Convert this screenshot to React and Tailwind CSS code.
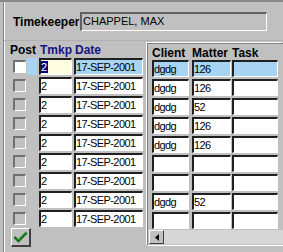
import React from 'react';

const rows = [
  { client: 'dgdg', matter: '126' },
  { client: 'dgdg', matter: '126' },
  { client: 'dgdg', matter: '52' },
  { client: 'dgdg', matter: '126' },
  { client: 'dgdg', matter: '126' },
  { client: '', matter: '' },
  { client: '', matter: '' },
  { client: 'dgdg', matter: '52' },
  { client: '', matter: '' },
];

const cell =
  'h-[17px] border-t-2 border-l-2 border-b border-r border-t-[#202020] border-l-[#202020] border-b-white border-r-white text-[11px] leading-[14px] tracking-[-0.6px] whitespace-nowrap overflow-hidden';

function Cell({ w, bg = 'bg-white', children }) {
  return <div className={`${cell} ${w} ${bg}`}>{children}</div>;
}

export default function App() {
  return (
    <div className="w-[283px] h-[252px] overflow-hidden bg-[#c0c0c0] border-t-2 border-[#8a8a8a] font-['Liberation_Sans',Arial,sans-serif] text-black">
      <div className="ml-[3px] h-full border-l border-[#808080] shadow-[inset_1px_0_0_#ffffff] flex flex-col">
        {/* timekeeper */}
        <div className="flex items-center mt-[10px] pl-[9px]">
          <span className="w-[67px] text-[12px] font-bold leading-[14px]">Timekeeper</span>
          <div className="w-[187px] h-[19px] border-t-2 border-l-2 border-b border-r border-t-[#606060] border-l-[#606060] border-b-white border-r-white text-[11px] leading-[15px] pl-[1px]">
            CHAPPEL, MAX
          </div>
        </div>
        <div className="mt-[9px] h-px bg-[#b0b0b0]" />

        <div className="flex flex-1">
          {/* left part */}
          <div className="w-[143px] flex flex-col pt-[2px]">
            <div className="flex text-[12px] font-bold leading-[14px]">
              <span className="w-[36px] pl-[6px]">Post</span>
              <span className="w-[35px] text-[#141482]">Tmkp</span>
              <span className="text-[#141482]">Date</span>
            </div>
            <div className="mt-[1px] flex flex-col gap-[2px]">
              {rows.map((r, i) => (
                <div key={i} className="flex h-[17px]">
                  <div className="w-[35px] flex items-center">
                    <div
                      className={`ml-[9px] w-[13px] h-[13px] border-t-2 border-l-2 border-b border-r border-t-[#707070] border-l-[#707070] border-b-white border-r-white ${
                        i === 0 ? 'bg-white' : 'bg-[#c0c0c0]'
                      }`}
                    />
                    {i === 0 && <div className="ml-[1px] w-[10px] h-[17px] bg-[#a6d4f2]" />}
                  </div>
                  <Cell w="w-[33px]" bg={i === 0 ? 'bg-[#fffde0]' : 'bg-white'}>
                    {i === 0 ? <span className="bg-[#000080] text-white pr-[1px]">2</span> : '2'}
                  </Cell>
                  <div className="w-[2px]" />
                  <Cell w="w-[69px]" bg={i === 0 ? 'bg-[#a6d4f2]' : 'bg-white'}>
                    17-SEP-2001
                  </Cell>
                </div>
              ))}
            </div>
            <button className="mt-[1px] ml-[7px] w-[20px] h-[19px] flex items-center justify-center border-t border-l border-b-2 border-r-2 border-t-white border-l-white border-b-[#404040] border-r-[#404040] bg-[#c0c0c0]">
              <svg width="15" height="12" viewBox="0 0 15 12">
                <polyline points="1.5,6 5.5,10 13.5,1.5" fill="none" stroke="#0f6a0f" strokeWidth="2.6" />
                <polyline points="2,5.5 5.5,9 13,1" fill="none" stroke="#3da83d" strokeWidth="1" />
              </svg>
            </button>
          </div>

          {/* right panel */}
          <div className="mt-[2px] mb-[6px] flex-1 border-l border-t border-[#808080] shadow-[-1px_-1px_0_#ffffff] border-b border-b-white flex flex-col">
            <div className="pt-[2px] pl-[4px] flex text-[12px] font-bold leading-[14px]">
              <span className="w-[40px]">Client</span>
              <span className="w-[40px]">Matter</span>
              <span>Task</span>
            </div>
            <div className="pl-[4px] flex flex-col gap-[2px]">
              {rows.map((r, i) => {
                const bg = i === 0 ? 'bg-[#a6d4f2]' : 'bg-white';
                return (
                  <div key={i} className="flex">
                    <Cell w="w-[37px]" bg={bg}>{r.client}</Cell>
                    <div className="w-[3px]" />
                    <Cell w="w-[39px]" bg={bg}>{r.matter}</Cell>
                    <div className="w-[1px]" />
                    <Cell w="w-[46px]" bg={bg}>{''}</Cell>
                  </div>
                );
              })}
            </div>
            <div className="mt-[1px] ml-[1px] h-[14px] flex bg-[#d6d6d6]">
              <div className="w-[15px] h-[14px] flex items-center justify-center border-t border-l border-b border-r border-t-white border-l-white border-b-[#404040] border-r-[#404040] bg-[#c0c0c0]">
                <svg width="4" height="7" viewBox="0 0 4 7">
                  <polygon points="4,0 0,3.5 4,7" fill="#000" />
                </svg>
              </div>
            </div>
          </div>
        </div>
      </div>
    </div>
  );
}
